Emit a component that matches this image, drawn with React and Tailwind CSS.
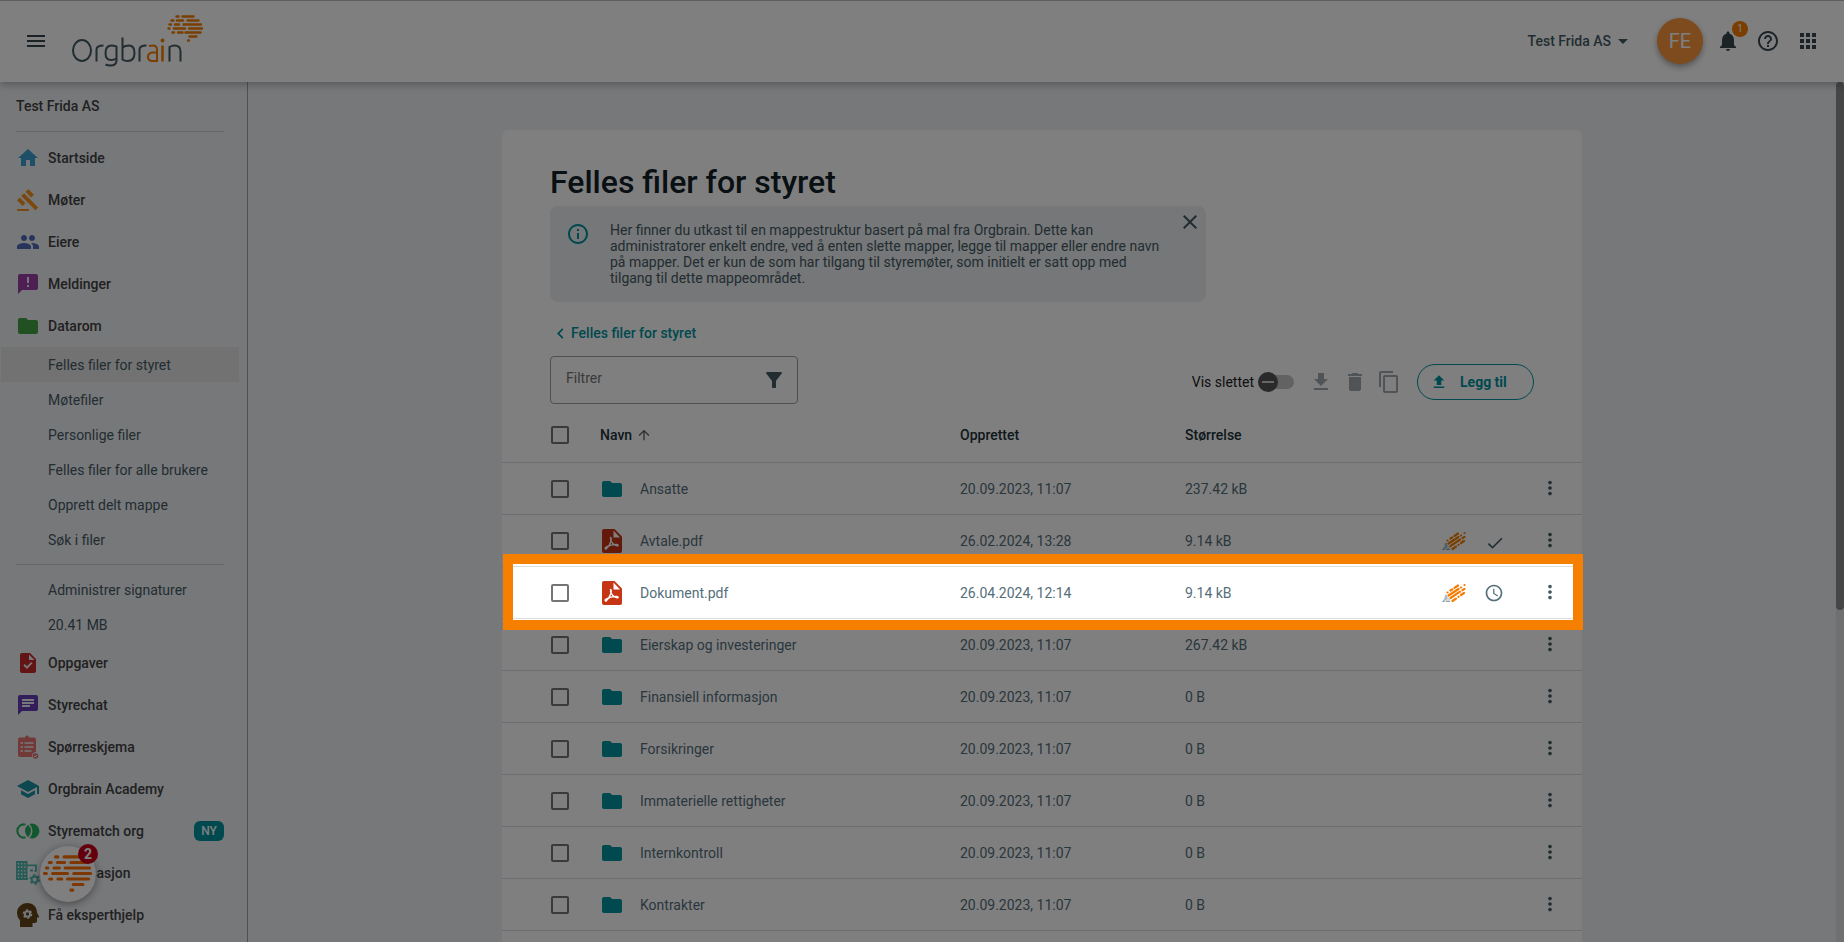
import {
  MdAccessTime,
  MdAnnouncement,
  MdApps,
  MdArrowDropDown,
  MdArrowUpward,
  MdChat,
  MdCheck,
  MdChevronLeft,
  MdClose,
  MdContentCopy,
  MdDelete,
  MdFileDownload,
  MdFileUpload,
  MdFilterAlt,
  MdFolder,
  MdGavel,
  MdGroup,
  MdHelpOutline,
  MdHome,
  MdInfoOutline,
  MdMenu,
  MdMoreVert,
  MdNotifications,
  MdSchool,
  MdTask,
} from "react-icons/md";

// [from, to, row]
const BRAIN_BARS = [
  [23, 34, 0], [41, 78, 0],
  [10, 20, 1], [27, 48, 1], [55, 94, 1],
  [4, 13, 2], [20, 37, 2], [43, 100, 2],
  [0, 10, 3], [17, 54, 3], [61, 102, 3],
  [11, 21, 4], [28, 42, 4], [48, 98, 4],
  [60, 86, 5],
  [55, 65, 6],
];

function Brain({ className }) {
  return (
    <svg viewBox="0 0 104 80" className={className} aria-hidden="true">
      {BRAIN_BARS.map(([from, to, row]) => (
        <line key={`${from}-${row}`} x1={from + 3} x2={to - 3} y1={row * 11.5 + 4} y2={row * 11.5 + 4} stroke="#ff6f00" strokeWidth="6.5" strokeLinecap="round" />
      ))}
    </svg>
  );
}

function Logo() {
  return (
    <svg viewBox="0 0 132 54" className="h-[54px] w-[132px]" fill="none" strokeWidth="2" aria-label="Orgbrain" role="img">
      <g stroke="#455a64">
        <ellipse cx="10" cy="36.5" rx="9" ry="10.5" />
        <path d="M24.5 47.500V35.5q0-4 7-4" />
        <path d="M44.5 32.5q-3-1-5-1q-6 0-6 7.500q0 7 5.500 7q3.500 0 5.500-1.500M44.500 32V46.500q0 5-6 5q-3 0-5-1" />
        <path d="M50.5 23.5v22q2 1.500 5 1.500q7 0 7-8q0-7.500-5.500-7.500q-4 0-6.500 2" />
        <path d="M67.5 47.500V35.500q0-4 7-4" />
        <path d="M97.5 47.500V33q2.500-1.500 5-1.500q6 0 6 6v10" />
      </g>
      <g stroke="#f57c00">
        <path d="M77 32q2-.5 4-.5q4 0 4 4.500v11h-4.500q-4.500 0-4.500-4t4.500-4.500H85" />
        <path d="M90.500 31.500v16" strokeWidth="2.5" />
        <circle cx="90.500" cy="26.500" r="1" fill="#f57c00" />
      </g>
      <g stroke="#f57c00" strokeWidth="2.4" strokeLinecap="round">
        <path d="M104.500 2.500h2M110.500 2.500h11M99.500 6.500h2M105 6.500h6M115.500 6.500h11M97.500 10.500h1.500M103 10.500h4M111.500 10.500h17.500M96.500 14.500h1M102 14.500h11M117 14.500h13M100.500 18.500h1.500M106 18.500h4.500M113.500 18.500h15M117.500 22.500h7M116 26.500h1" />
      </g>
    </svg>
  );
}

function SurveyIcon() {
  return (
    <svg viewBox="0 0 24 24" className="size-6">
      <path fill="#e57373" d="M4 2.500h5a2 2 0 0 1 4 0h5a2 2 0 0 1 2 2V17a4 4 0 0 0-4 5H4a2 2 0 0 1-2-2V4.500a2 2 0 0 1 2-2z" />
      <path stroke="#eceff1" strokeWidth="1.6" d="M4.500 8h2.500M8.500 8h9M4.500 12h2.500M8.500 12h9M4.500 16h2.500M8.500 16h7" />
      <circle cx="19.500" cy="21" r="2.800" fill="#e57373" />
      <path d="m18 21 1 1 2-2" fill="none" stroke="#eceff1" />
    </svg>
  );
}

function MatchIcon() {
  return (
    <svg viewBox="0 0 24 24" className="size-6">
      <path fill="#27ae60" d="M16 4.500a7.500 7.500 0 1 1-2.500 14.600q3-3 3-7.100t-3-7.100q1.200-.4 2.500-.4z" />
      <path fill="#27ae60" d="M12 5.800q3 2.500 3 6.200t-3 6.200q-3-2.500-3-6.200t3-6.200z" />
      <path fill="none" stroke="#27ae60" strokeWidth="2" d="M9.500 5.600a6.600 6.600 0 1 0 0 12.800" />
    </svg>
  );
}

function OrganisationIcon() {
  return (
    <svg viewBox="0 0 24 24" className="size-6" fill="none" stroke="#4db6ac">
      <path strokeWidth="1.8" d="M1 0v18.500M4.200 0v18.500M7.400 0v18.500M10.500 0v18.500M0 1h11.500M0 4.400h20V10M0 8h11.500M0 11.400h11.500M0 14.800h11.500M0 18h12M14 9.500h3M19.500 9v2" />
      <circle cx="18.700" cy="18.500" r="3" strokeWidth="2" />
      <circle cx="18.700" cy="18.500" r="4.500" strokeWidth="1.6" strokeDasharray="2.400 2.312" />
    </svg>
  );
}

function ExpertIcon() {
  return (
    <svg viewBox="0 0 24 24" className="size-6">
      <path fill="#654316" d="M11.500 0C17 0 21 4 21 9.500l2 4c.3.700 0 1-.6 1H21V18a2 2 0 0 1-2 2h-2.500v4H4v-6.500A11 11 0 0 1 1 10C1 4.500 5.500 0 11.500 0z" />
      <circle cx="11.500" cy="11" r="2.700" fill="none" stroke="#eceff1" strokeWidth="2" />
      <circle cx="11.500" cy="11" r="4.100" fill="none" stroke="#eceff1" strokeWidth="1.4" strokeDasharray="2.200 2.093" />
    </svg>
  );
}

function PdfIcon() {
  return (
    <svg viewBox="0 0 20 24" className="h-6 w-5" fill="none">
      <path fill="#c63514" d="M2 0h10.500L20 7.500V22a2 2 0 0 1-2 2H2a2 2 0 0 1-2-2V2a2 2 0 0 1 2-2z" />
      <path fill="#fff" d="M11.500 1.500v7h6.500z" />
      <g stroke="#fff" strokeWidth="1.4" strokeLinecap="round">
        <path d="M8.500 8.500c1.200.3.700 2.500.2 4.300-.8 2.500-2.400 5.500-4.300 7-1 .6-1.800-.6-.7-1.400 2.500-1.600 7-3 11-3 2 .1 1.800 1.600.3 1.300-3.200-.6-5.800-3.500-6.500-6.500" />
      </g>
    </svg>
  );
}

function SignIcon() {
  return (
    <svg viewBox="0 0 24 20" className="h-5 w-6" fill="none">
      <path fill="#cfd8dc" d="m3.500 11 5.500 6.500L.5 19z" />
      <path stroke="#90a4ae" d="M.5 18.500 5 15M4 12v3.500M.5 18.500h2M4 18.500h4" />
      <path
        stroke="#f57c00"
        strokeWidth="2.2"
        strokeLinecap="round"
        d="M5.500 9.500h.1M8.500 7.500l1.800-1.200M12.500 4.800 16 2.500M19 4.500h.1M22.500 2h.1M6.500 12.500 16.500 6M8.500 15l9.500-6.300M20.500 7.200l2-1.400M10.500 18l3.500-2.400M16.500 13.800h.1M19 12l3-2"
      />
    </svg>
  );
}

const MAIN_LINKS = [
  { label: "Startside", icon: <MdHome size={24} className="text-[#3ba0d0]" /> },
  { label: "Møter", icon: <MdGavel size={24} className="text-[#f7921e]" /> },
  { label: "Eiere", icon: <MdGroup size={24} className="text-[#5068b8]" /> },
  { label: "Meldinger", icon: <MdAnnouncement size={24} className="text-[#9c3fa5]" /> },
  { label: "Datarom", icon: <MdFolder size={24} className="text-[#43a047]" /> },
];

const FOLDER_LINKS = ["Felles filer for styret", "Møtefiler", "Personlige filer", "Felles filer for alle brukere", "Opprett delt mappe", "Søk i filer"];

const MORE_LINKS = [
  { label: "Oppgaver", icon: <MdTask size={24} className="text-[#c62828]" /> },
  { label: "Styrechat", icon: <MdChat size={24} className="text-[#673ab7]" /> },
  { label: "Spørreskjema", icon: <SurveyIcon /> },
  { label: "Orgbrain Academy", icon: <MdSchool size={24} className="text-[#1a8fa0]" /> },
  { label: "Styrematch org", icon: <MatchIcon />, badge: "NY" },
  { label: "Organisasjon", icon: <OrganisationIcon /> },
  { label: "Få eksperthjelp", icon: <ExpertIcon /> },
];

const FILES = [
  { name: "Ansatte", created: "20.09.2023, 11:07", size: "237.42 kB" },
  { name: "Avtale.pdf", created: "26.02.2024, 13:28", size: "9.14 kB", pdf: true, status: "signed" },
  { name: "Dokument.pdf", created: "26.04.2024, 12:14", size: "9.14 kB", pdf: true, status: "waiting", highlight: true },
  { name: "Eierskap og investeringer", created: "20.09.2023, 11:07", size: "267.42 kB" },
  { name: "Finansiell informasjon", created: "20.09.2023, 11:07", size: "0 B" },
  { name: "Forsikringer", created: "20.09.2023, 11:07", size: "0 B" },
  { name: "Immaterielle rettigheter", created: "20.09.2023, 11:07", size: "0 B" },
  { name: "Internkontroll", created: "20.09.2023, 11:07", size: "0 B" },
  { name: "Kontrakter", created: "20.09.2023, 11:07", size: "0 B" },
];

function Checkbox({ label }) {
  return <input type="checkbox" aria-label={label} className="block size-[18px] appearance-none rounded-xs border-2 border-[#757575]" />;
}

function NavLink({ label, icon, badge }) {
  return (
    <a href="#" className="flex h-[42px] items-center gap-2 px-4 text-sm font-medium text-[#424242]">
      {icon}
      <span className="grow">{label}</span>
      {badge && <span className="mr-[7px] flex h-5 w-[30px] items-center justify-center rounded-md bg-[#00929f] text-xs font-medium text-white">{badge}</span>}
    </a>
  );
}

function SubLink({ label, active }) {
  return (
    <a href="#" className={`ml-px mr-2 flex h-[35px] items-center pl-[47px] text-sm text-[#455a64] ${active ? "bg-[#e4e5e7]" : ""}`}>
      {label}
    </a>
  );
}

function Header() {
  return (
    <header className="relative z-10 flex h-[82px] shrink-0 items-center border-t border-[#bdbdbd] bg-white px-6 pb-[2px] text-[#37474f] shadow-[0_2px_8px_rgba(0,0,0,0.3)]">
      <button aria-label="Meny"><MdMenu size={24} /></button>
      <a href="#" className="ml-6"><Logo /></a>
      <button className="ml-auto flex items-center text-sm font-medium text-[#455a64]">
        Test Frida AS
        <MdArrowDropDown size={24} />
      </button>
      <button className="ml-[22px] size-[46px] rounded-full bg-[#fb963c] text-xl text-white shadow-[0_3px_6px_rgba(0,0,0,0.35)]">FE</button>
      <button aria-label="Varsler" className="relative ml-[13px]">
        <MdNotifications size={24} />
        <span className="absolute -top-2 left-4 flex size-4 items-center justify-center rounded-full bg-[#f57c00] text-[10px] text-white">1</span>
      </button>
      <button aria-label="Hjelp" className="ml-4"><MdHelpOutline size={24} /></button>
      <button aria-label="Apper" className="ml-4"><MdApps size={24} /></button>
    </header>
  );
}

function Sidebar() {
  return (
    <nav className="relative w-[248px] shrink-0 border-r border-[#9ea4a8]">
      <div className="mr-[23px] mb-[5px] ml-4 flex h-[50px] items-center border-b border-[#ccced1] pb-[2px] text-sm font-medium text-[#424242]">Test Frida AS</div>
      {MAIN_LINKS.map((link) => <NavLink key={link.label} {...link} />)}
      {FOLDER_LINKS.map((label, i) => <SubLink key={label} label={label} active={i === 0} />)}
      <hr className="my-[7px] mr-[23px] ml-4 border-[#ccced1]" />
      <SubLink label="Administrer signaturer" />
      <SubLink label="20.41 MB" />
      {MORE_LINKS.map((link) => <NavLink key={link.label} {...link} />)}
      <button aria-label="Chat" className="absolute bottom-10 left-10 flex size-14 items-center justify-center rounded-full bg-white shadow-[0_2px_8px_rgba(0,0,0,0.4)]">
        <Brain className="w-[50px]" />
        <span className="absolute -top-[2px] left-[38px] flex size-5 items-center justify-center rounded-full bg-[#c8001a] text-sm font-bold text-white">2</span>
      </button>
    </nav>
  );
}

function FileRow({ file }) {
  return (
    <tr className="relative h-[52px] border-y border-[#dcdde0]">
      <td className="pt-[2px] pl-[49px]">
        <Checkbox label={`Velg ${file.name}`} />
        {/* the frame's outer shadow dims the rest of the page */}
        {file.highlight && (
          <span className="pointer-events-none absolute -top-[13px] left-px -right-px z-50 h-[76px] border-[10px] border-[#f77f00] shadow-[0_0_0_3000px_rgba(0,0,0,0.5)]" />
        )}
      </td>
      <td className="pt-[2px]">
        <div className="flex items-center gap-4">
          <span className="flex w-6 justify-center">{file.pdf ? <PdfIcon /> : <MdFolder size={24} className="text-[#00929f]" />}</span>
          {file.name}
        </div>
      </td>
      <td className="pt-[2px]">{file.created}</td>
      <td className="pt-[2px]">{file.size}</td>
      <td className="pt-[2px]">
        {file.status && (
          <div className="flex items-center gap-[18px] pl-8">
            <SignIcon />
            {file.status === "signed" ? <MdCheck size={20} className="mt-1 ml-px text-[#455a64]" /> : <MdAccessTime size={20} />}
          </div>
        )}
      </td>
      <td><button aria-label="Flere valg" className="block pl-[14px] text-[#455a64]"><MdMoreVert size={22} /></button></td>
    </tr>
  );
}

function FileTable() {
  return (
    <table className="mt-1 w-full table-fixed text-left text-sm text-[#546e7a]">
      <colgroup>
        <col className="w-[98px]" />
        <col />
        <col className="w-[225px]" />
        <col className="w-[225px]" />
        <col className="w-[115px]" />
        <col className="w-[57px]" />
      </colgroup>
      <thead>
        <tr className="h-[54px] text-[#1c313a]">
          <th className="pl-[49px]"><Checkbox label="Velg alle" /></th>
          <th className="font-medium"><span className="flex items-center gap-1">Navn <MdArrowUpward size={16} className="text-[#616161]" /></span></th>
          <th className="font-medium">Opprettet</th>
          <th className="font-medium">Størrelse</th>
          <th />
          <th />
        </tr>
      </thead>
      <tbody>
        {FILES.map((file) => <FileRow key={file.name} file={file} />)}
      </tbody>
    </table>
  );
}

export default function App() {
  return (
    <div className="flex h-screen flex-col overflow-hidden bg-[#eef0f4] font-['Roboto',sans-serif]">
      <Header />
      <div className="flex min-h-0 grow">
        <Sidebar />
        <main className="min-w-0 grow px-12 pt-12">
          <div className="mx-auto max-w-[1080px] rounded-md bg-white pt-8 pb-12">
            <div className="px-12">
              <h1 className="mb-1 text-[32px] leading-10 font-medium text-[#102027]">Felles filer for styret</h1>
              <section className="relative flex max-w-[656px] items-start gap-5 rounded-lg bg-[#eceff1] py-4 pr-10 pl-4 text-sm leading-4 text-[#455a64]">
                <MdInfoOutline size={24} className="shrink-0 text-[#00929f]" />
                <p>
                  Her finner du utkast til en mappestruktur basert på mal fra Orgbrain. Dette kan administratorer enkelt endre, ved å enten slette mapper, legge til mapper eller endre navn på mapper. Det er kun de som har tilgang til styremøter, som initielt er satt opp med tilgang til dette mappeområdet.
                </p>
                <button aria-label="Lukk" className="absolute top-1 right-1"><MdClose size={24} /></button>
              </section>
              <a href="#" className="mt-5 flex h-[22px] items-center text-sm font-medium text-[#00929f]">
                <MdChevronLeft size={21} />Felles filer for styret
              </a>
              <div className="mt-3 flex items-center">
                <label className="flex h-12 w-[248px] items-center rounded-sm border border-[#9e9e9e] pr-[11px] pl-[15px] text-[#455a64]">
                  <input type="text" placeholder="Filtrer" aria-label="Filtrer" className="min-w-0 grow pb-1 text-sm outline-none placeholder:text-[#757575]" />
                  <MdFilterAlt size={24} />
                </label>
                <div className="ml-auto flex items-center pt-1">
                  <label className="flex items-center gap-1 text-sm text-[#212121]">
                    Vis slettet
                    <input type="checkbox" role="switch" className="peer sr-only" />
                    <span className="flex h-[14px] w-9 items-center rounded-full bg-[#c4c4c4]">
                      <span className="flex size-5 shrink-0 items-center justify-center rounded-full bg-[#555555]"><span className="h-[2px] w-3 bg-[#cfcfcf]" /></span>
                    </span>
                  </label>
                  <div className="ml-[15px] flex items-center gap-[10px] text-[#a1a9ad]">
                    <button aria-label="Last ned"><MdFileDownload size={24} /></button>
                    <button aria-label="Slett"><MdDelete size={24} /></button>
                    <button aria-label="Kopier"><MdContentCopy size={24} /></button>
                  </div>
                  <button className="ml-4 flex h-9 w-[117px] items-center gap-3 rounded-full border border-[#00929f] pl-3 text-sm font-bold text-[#00929f]">
                    <MdFileUpload size={18} />Legg til
                  </button>
                </div>
              </div>
            </div>
            <FileTable />
          </div>
        </main>
        <div className="w-2 shrink-0 bg-[#dfe1e4]"><div className="h-[528px] rounded-full bg-[#8c8c8c]" /></div>
      </div>
    </div>
  );
}
